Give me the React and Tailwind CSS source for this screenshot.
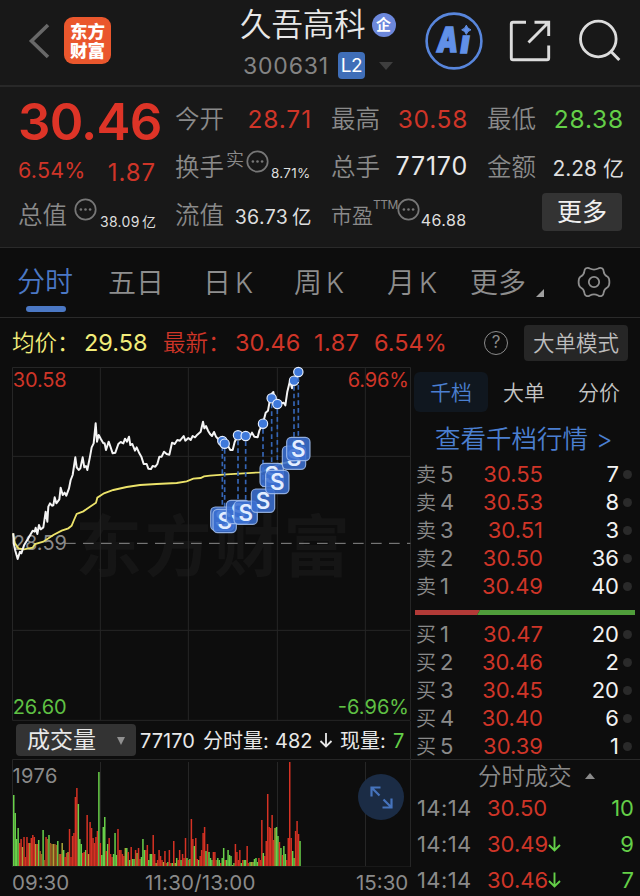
import { clsx } from "clsx";

const sells = [
  { label: "卖", level: "5", price: "30.55", size: "7" },
  { label: "卖", level: "4", price: "30.53", size: "8" },
  { label: "卖", level: "3", price: "30.51", size: "3" },
  { label: "卖", level: "2", price: "30.50", size: "36" },
  { label: "卖", level: "1", price: "30.49", size: "40" },
];

const buys = [
  { label: "买", level: "1", price: "30.47", size: "20" },
  { label: "买", level: "2", price: "30.46", size: "2" },
  { label: "买", level: "3", price: "30.45", size: "20" },
  { label: "买", level: "4", price: "30.40", size: "6" },
  { label: "买", level: "5", price: "30.39", size: "1" },
];

const deals = [
  { time: "14:14", price: "30.50", down: false, size: "10" },
  { time: "14:14", price: "30.49", down: true, size: "9" },
  { time: "14:14", price: "30.46", down: true, size: "7" },
];

// chart units are thirds of a pixel
const pricePoints =
  "40,520 41,550 46,572 53,597 60,575 64,580 72,556 85,535 98,512 104,515 107,503 112,522 117,495 122,508 130,502 137,455 142,485 145,440 150,430 156,437 160,436 164,412 169,430 178,418 182,383 188,405 194,398 199,407 207,385 212,360 218,345 226,292 230,322 236,330 241,325 248,292 253,322 258,318 262,330 270,290 275,262 281,250 287,190 291,245 296,225 303,238 310,250 314,250 318,270 326,245 332,262 338,280 346,278 355,252 362,246 370,250 375,236 381,245 387,230 391,255 397,252 405,272 410,262 418,280 424,290 431,312 440,312 445,326 453,327 458,318 466,320 472,312 478,290 485,290 492,275 500,282 508,284 516,248 524,252 532,240 540,242 551,228 556,242 565,234 572,240 578,228 585,232 592,224 602,215 609,185 613,205 618,198 624,212 630,222 636,228 642,216 648,230 657,240 664,240 674,250 684,258 691,270 698,270 704,246 712,228 725,225 737,228 750,228 756,218 763,230 773,232 778,212 789,190 797,158 804,152 810,118 816,100 820,96 824,118 832,132 843,130 851,128 856,136 862,95 870,62 876,85 882,62 889,45 896,36";

const averagePoints =
  "39,520 45,550 55,565 72,568 98,563 105,552 130,545 160,525 185,512 205,505 215,497 222,480 230,462 250,454 270,440 288,428 292,413 312,400 340,390 380,381 420,375 470,372 530,369 560,364 580,356 602,354 612,349 630,347 680,343 780,337 810,325 840,312 880,303 895,298";

const signals = [
  { x: 667, dot: 243, tag: 476 },
  { x: 674, dot: 251, tag: 483 },
  { x: 714, dot: 226, tag: 456 },
  { x: 737, dot: 228, tag: 458 },
  { x: 789, dot: 191, tag: 422 },
  { x: 815, dot: 115, tag: 345 },
  { x: 832, dot: 132, tag: 366 },
  { x: 882, dot: 62, tag: 293 },
  { x: 895, dot: 36, tag: 267 },
];

const volumes =
  "g71 g53 g27 g38 r23 r27 y19 r29 r9 r29 r23 y23 r28 r31 r29 y22 r22 g26 o15 o12 g36 o6 r29 o27 g31 o23 o22 y22 o22 o21 g25 o12 r12 y23 g16 r9 r13 y14 r37 r9 r30 r33 r69 r78 g62 g27 g22 r13 r14 g16 r51 y12 r44 r38 r28 r23 r29 r35 g94 r23 g11 g39 g49 r15 g22 r28 r12 r9 g12 g33 g11 r37 r16 r16 r12 r10 y18 g18 r14 g6 r19 g7 g7 r16 y13 r18 r7 g9 g27 g16 r16 r21 g6 g12 g12 r31 r12 y3 r6 r16 r10 r6 y4 r15 r3 g4 r16 r3 g3 r25 y3 g8 r6 r16 g6 r12 r8 r28 g8 r6 g7 r47 r27 g20 r28 r7 g6 r10 r16 r33 r39 g15 r22 g14 g8 g6 r14 r14 o6 g8 g6 r3 g8 g18 r6 g6 g16 g11 g10 y1 g3 r22 r14 r6 r16 g3 r6 g6 g6 r20 r3 g4 y4 y4 g7 g8 g4 r8 r6 r46 g13 r10 r25 r72 r39 r38 r51 r26 y38 g39 g30 r24 g18 r11 g20 g12 r6 r28 r104 r28 g15 g8 r35 r45 r32 g25"
    .split(" ")
    .map((v) => ({ kind: v[0], height: Number(v.slice(1)) }));

const volumeFill = { r: "#d53224", g: "#69d04a", y: "#a9a637", o: "#9c5a22" };

function MoreDots({ className }) {
  return (
    <svg
      className={clsx("h-[23px] w-[23px] shrink-0", className)}
      viewBox="0 0 23 23"
      fill="#777"
    >
      <circle cx="11.5" cy="11.5" r="10.2" fill="none" stroke="#777" strokeWidth="1.7" />
      <circle cx="6.9" cy="11.5" r="1.3" />
      <circle cx="11.5" cy="11.5" r="1.3" />
      <circle cx="16.1" cy="11.5" r="1.3" />
    </svg>
  );
}

function Header() {
  return (
    <header className="flex h-[87px] shrink-0 border-b-2 border-[#282828] bg-[#181818]">
      <svg className="mt-[23px] ml-7 h-9 w-[22px]" viewBox="0 0 22 36">
        <path d="M20 2L3.5 18L20 34" fill="none" stroke="#686868" strokeWidth="3.6" />
      </svg>
      <div className="mt-[17px] ml-3.5 flex h-[47px] w-[47px] flex-col items-center justify-center rounded-[9px] bg-[#ea572d] text-[17.5px] leading-[19px] font-black text-white">
        <span>东方</span>
        <span>财富</span>
      </div>
      <div className="ml-[129px] w-[180px]">
        <div className="flex h-[50px] items-center">
          <h1 className="pt-0.5 text-[31.4px] font-[350] whitespace-nowrap text-[#e8e8e8]">
            久吾高科
          </h1>
          <span className="ml-1.5 flex h-6 w-6 items-center justify-center rounded-full bg-[#6c88dc] text-[15px] font-bold text-white">
            企
          </span>
        </div>
        <div className="flex h-[31px] items-center pl-[3px]">
          <span className="w-[95px] pt-0.5 text-[23px] tracking-[0.8px] text-[#848484]">
            300631
          </span>
          <span className="flex h-[27px] w-[27px] items-center justify-center rounded bg-[#3f6eb8] pt-px text-[19px] tracking-[-0.5px] text-white">
            L2
          </span>
          <svg className="ml-3.5 h-2 w-3.5" viewBox="0 0 14 8">
            <path d="M0 0H14L7 8Z" fill="#3e3e3e" />
          </svg>
        </div>
      </div>
      <svg className="mt-3 ml-1 h-[58px] w-[60px]" viewBox="424 12 60 58">
        <circle cx="454" cy="41" r="27.4" fill="none" stroke="#5886dc" strokeWidth="2.6" />
        <g fill="#6190e8" stroke="#6190e8" strokeWidth="1.4" className="text-[34px] font-black italic">
          <text x="437" y="51.5" textLength="21" lengthAdjust="spacingAndGlyphs">
            A
          </text>
          <text x="460.5" y="52.5" fontSize="31" textLength="9" lengthAdjust="spacingAndGlyphs">
            ı
          </text>
        </g>
        <path
          d="M466.3 25.2Q467.3 28.7 471 29.8Q467.3 31 466.3 34.4Q465.3 31 461.7 29.8Q465.3 28.7 466.3 25.2Z"
          fill="#6190e8"
          stroke="#6190e8"
          strokeWidth="1"
        />
      </svg>
      <svg className="mt-[19px] ml-6 h-11 w-11" viewBox="508 19 44 44">
        <path
          d="M526 22.2H513Q511.3 22.2 511.3 24V58Q511.3 59.8 513 59.8H547Q548.7 59.8 548.7 58V45.5M534.5 22.2H548.7V36M548.7 22.2L528.5 42.5"
          fill="none"
          stroke="#dcdcdc"
          strokeWidth="2.9"
        />
      </svg>
      <svg className="mt-[18px] ml-6 h-[46px] w-[46px]" viewBox="576 18 46 46">
        <circle cx="598.3" cy="39" r="17.8" fill="none" stroke="#dcdcdc" strokeWidth="2.8" />
        <path d="M610.5 51L619.3 60" stroke="#dcdcdc" strokeWidth="3" />
      </svg>
    </header>
  );
}

function Stats() {
  const label = "text-[24.5px] font-[350] text-[#8a8a8a]";
  return (
    <section className="flex h-[161px] shrink-0 gap-[19px] border-b border-[#2a2a2a] bg-[#181818] pt-2 pl-[18px] whitespace-nowrap">
      <div className="w-[138px]">
        <div className="flex h-12 items-center pt-1.5 text-[51px] font-semibold tracking-[-0.8px] text-[#dd3427]">
          30.46
        </div>
        <div className="flex h-12 items-center justify-between pt-1.5 text-[#cf3528]">
          <span className="text-[21.5px] tracking-[0.2px]">6.54%</span>
          <span className="pt-1.5 text-[24px] tracking-[0.9px]">1.87</span>
        </div>
        <div className="flex h-12 items-center">
          <span className={label}>总值</span>
          <MoreDots className="mb-3 ml-[7px]" />
          <span className="mt-3 ml-[3px] text-[14px] tracking-[0.3px] [word-spacing:-2px] text-[#dedede]">
            38.09 亿
          </span>
        </div>
      </div>
      <div className="w-[137px]">
        <div className="flex h-12 items-center justify-between">
          <span className={label}>今开</span>
          <span className="text-[24.5px] tracking-[0.9px] text-[#cf3528]">28.71</span>
        </div>
        <div className="flex h-12 items-center">
          <span className={label}>换手</span>
          <span className="mb-4 ml-0.5 text-[18px] font-[350] text-[#8a8a8a]">实</span>
          <MoreDots className="mb-3 ml-0.5" />
          <span className="mt-3 ml-0.5 text-[13.5px] tracking-[0.3px] text-[#dedede]">8.71%</span>
        </div>
        <div className="flex h-12 items-center justify-between">
          <span className={label}>流值</span>
          <span className="pt-1.5 text-[19.5px] tracking-[0.4px] [word-spacing:-2px] text-[#dedede]">
            36.73 亿
          </span>
        </div>
      </div>
      <div className="w-[137px]">
        <div className="flex h-12 items-center justify-between">
          <span className={label}>最高</span>
          <span className="text-[24.5px] tracking-[0.7px] text-[#cf3528]">30.58</span>
        </div>
        <div className="flex h-12 items-center justify-between">
          <span className={label}>总手</span>
          <span className="text-[25px] tracking-[0.8px] text-[#e8e8e8]">77170</span>
        </div>
        <div className="flex h-12 items-center">
          <span className="pt-0.5 text-[21px] font-[350] text-[#8a8a8a]">市盈</span>
          <span className="mb-5 text-[12px] tracking-[-0.5px] text-[#8a8a8a]">TTM</span>
          <MoreDots className="mb-3 -ml-px" />
          <span className="mt-2.5 ml-px text-[16px] tracking-[0.4px] text-[#dedede]">46.88</span>
        </div>
      </div>
      <div className="w-[137px]">
        <div className="flex h-12 items-center justify-between">
          <span className={label}>最低</span>
          <span className="text-[24.5px] tracking-[0.8px] text-[#64cf48]">28.38</span>
        </div>
        <div className="flex h-12 items-center justify-between">
          <span className={label}>金额</span>
          <span className="pt-1 text-[21px] text-[#dedede]">2.28 亿</span>
        </div>
        <button className="mt-0.5 mr-0.5 ml-auto block h-[38px] w-20 rounded bg-[#333] text-[25px] leading-[39px] text-[#f0f0f0]">
          更多
        </button>
      </div>
    </section>
  );
}

function PeriodTabs() {
  return (
    <nav className="flex h-[70px] shrink-0 items-center border-b border-[#2a2a2a] text-[28px] font-[350] whitespace-nowrap [word-spacing:-4px] text-[#8e8e8e]">
      <div className="flex h-[70px] w-[91px] flex-col pl-[17px] text-[#4b78c4]">
        <span className="flex h-[58px] items-center pt-2.5">分时</span>
        <span className="ml-[9px] h-1.5 w-10 shrink-0 rounded-full bg-[#4b78c4]" />
      </div>
      <span className="ml-[17px] w-[95px]">五日</span>
      <span className="w-[91px]">日 K</span>
      <span className="w-[93px]">周 K</span>
      <span className="w-[83px]">月 K</span>
      <span>更多</span>
      <svg className="mt-5 ml-2.5 h-2 w-2" viewBox="0 0 8 8">
        <path d="M8 0V8H0Z" fill="#a0a0a0" />
      </svg>
      <svg className="mb-0.5 ml-[33px] h-[34px] w-[34px]" viewBox="-17 -17 34 34">
        <g fill="none" stroke="#8e8e8e" strokeWidth="1.8" strokeLinejoin="round">
          <path d="M-8 -13.7Q-6 -14.8 -4.2 -13.5Q0 -11.4 4.2 -13.5Q6 -14.8 8 -13.7Q9.6 -12.8 9.7 -10.5Q10 -7 13.6 -5.2Q15.4 -4 15.4 0Q15.4 4 13.6 5.2Q10 7 9.7 10.5Q9.6 12.8 8 13.7Q6 14.8 4.2 13.5Q0 11.4 -4.2 13.5Q-6 14.8 -8 13.7Q-9.6 12.8 -9.7 10.5Q-10 7 -13.6 5.2Q-15.4 4 -15.4 0Q-15.4 -4 -13.6 -5.2Q-10 -7 -9.7 -10.5Q-9.6 -12.8 -8 -13.7Z" />
          <circle r="5.2" />
        </g>
      </svg>
    </nav>
  );
}

function QuoteLine() {
  return (
    <div className="flex h-[49px] shrink-0 items-center pt-px pl-3 text-[23.5px] whitespace-nowrap text-[#cf3528]">
      <span className="w-[72px] text-[22.5px] font-[350] text-[#f2ec7a]">均价：</span>
      <span className="w-[79px] text-[#f2ec7a]">29.58</span>
      <span className="w-[72px] text-[22.5px] font-[350]">最新：</span>
      <span className="w-[79px]">30.46</span>
      <span className="w-[60px] tracking-[0.5px]">1.87</span>
      <span className="w-[110px]">6.54%</span>
      <span className="flex h-6 w-6 shrink-0 items-center justify-center rounded-full border-[1.5px] border-[#8a8a8a] text-[17px] text-[#8a8a8a]">
        ?
      </span>
      <button className="ml-4 h-9 w-[104px] rounded bg-[#262626] text-[21.5px] font-[350] text-[#bdbdbd]">
        大单模式
      </button>
    </div>
  );
}

function PriceChart() {
  return (
    <svg
      className="block h-[354px] w-[399px]"
      viewBox="36 21 1197 1062"
      fontSize="60"
      overflow="visible"
    >
      <text x="226" y="634" fontSize="200" fontWeight="700" fill="#151515" textLength="824">
        东方财富
      </text>
      <path
        d="M37.5 22.5H1231.5V1081H37.5ZM301 22V1081M565 22V1081M832 22V1081M1096 22V1081M37 289H1231M37 811H1231"
        fill="none"
        stroke="#262626"
        strokeWidth="3"
      />
      <path d="M195 550H1231" stroke="#8a8a8a" strokeWidth="3" strokeDasharray="32 22" />
      <text x="38" y="571" fill="#8a8a8a" textLength="163">
        28.59
      </text>
      <polyline points={averagePoints} fill="none" stroke="#ece36a" strokeWidth="5.5" />
      <polyline
        points={pricePoints}
        fill="none"
        stroke="#f4f4f4"
        strokeWidth="6"
        strokeLinejoin="round"
      />
      {signals.map((s) => (
        <g key={s.x}>
          <path
            d={`M${s.x} ${s.dot + 16}V${s.tag - 35}`}
            stroke="#3565b4"
            strokeWidth="5"
            strokeDasharray="14 9"
          />
          <circle cx={s.x} cy={s.dot} r="14" fill="#3f79da" stroke="#e6efff" strokeWidth="3.5" />
        </g>
      ))}
      {signals.map((s) => (
        <g key={s.x}>
          <rect
            x={s.x - 35}
            y={s.tag - 35}
            width="70"
            height="70"
            rx="14"
            fill="#3b70d2"
            fillOpacity="0.88"
            stroke="#a3bfee"
            strokeOpacity="0.85"
            strokeWidth="3.5"
          />
          <text
            x={s.x}
            y={s.tag + 24}
            fontSize="67"
            fontWeight="600"
            fill="#e3edff"
            textAnchor="middle"
          >
            S
          </text>
        </g>
      ))}
      <text x="38" y="82" fill="#cf3528" textLength="162">
        30.58
      </text>
      <text x="1043" y="82" fill="#cf3528" textLength="184">
        6.96%
      </text>
      <text x="38" y="1062" fill="#5fc044" textLength="162">
        26.60
      </text>
      <text x="1013" y="1062" fill="#5fc044" textLength="214">
        -6.96%
      </text>
    </svg>
  );
}

function VolumeChart() {
  return (
    <div className="relative h-[108px]">
      <svg className="block h-[108px] w-[399px]" viewBox="12 759 399 108">
        <path
          d="M12.5 759.5H410.5V867H12.5ZM100.5 762V866M188.5 762V866M277.5 762V866M365.5 762V866"
          fill="none"
          stroke="#262626"
        />
        {volumes.map((v, i) => (
          <rect
            key={i}
            x={13 + i * 1.468}
            y={866 - v.height}
            width="1.5"
            height={v.height}
            fill={volumeFill[v.kind]}
          />
        ))}
        <text x="12.5" y="782.5" fontSize="20" fill="#8a8a8a" textLength="45">
          1976
        </text>
      </svg>
      <button className="absolute top-[15px] left-[346px] flex h-[46px] w-[46px] items-center justify-center rounded-full bg-[#1b2c45]">
        <svg className="h-[23px] w-[23px]" viewBox="0 0 23 23">
          <path
            d="M10.5 1.5H1.5V10.5M1.5 1.5L9.5 9.5M21.5 12.5V21.5H12.5M21.5 21.5L13.5 13.5"
            fill="none"
            stroke="#4674bd"
            strokeWidth="2.2"
          />
        </svg>
      </button>
    </div>
  );
}

function ChartPanel() {
  return (
    <div className="w-[399px] shrink-0">
      <PriceChart />
      <div className="flex h-[38px] items-center border-r border-[#262626] pl-1 text-[20px] whitespace-nowrap text-[#e8e8e8]">
        <button className="flex h-8 w-[120px] shrink-0 items-center justify-between rounded bg-[#333] pt-px pr-[11px] pl-[11px] text-[23px]">
          成交量
          <svg className="h-2 w-2" viewBox="0 0 8 8">
            <path d="M0 0H8L4 8Z" fill="#909090" />
          </svg>
        </button>
        <span className="ml-1 w-[63px] pt-px">77170</span>
        <span className="w-[72px] pt-px">分时量:</span>
        <span className="w-[43px] pt-px">482</span>
        <svg className="mr-1.5 h-4 w-4" viewBox="0 0 16 16">
          <path d="M8 1V15M2.5 9L8 14.5L13.5 9" fill="none" stroke="#e8e8e8" strokeWidth="1.8" />
        </svg>
        <span className="w-[53px] pt-px">现量:</span>
        <span className="pt-px text-[#64cf48]">7</span>
      </div>
      <VolumeChart />
      <div className="flex h-[29px] items-center pt-1 text-[20.5px] text-[#8a8a8a]">
        <span className="w-[133px]">09:30</span>
        <span className="w-[211px] tracking-[0.2px]">11:30/13:00</span>
        <span>15:30</span>
      </div>
    </div>
  );
}

function BookRow({ label, level, price, size }) {
  return (
    <div className="flex h-7 items-center pl-[5px] text-[22px]">
      <span className="w-6 pt-px text-[20px] font-[350] text-[#8a8a8a]">{label}</span>
      <span className="w-[30px] pt-px text-[#8a8a8a]">{level}</span>
      <span className="w-[73px] pt-px text-right text-[#cf3528]">{price}</span>
      <span className="w-[76px] pt-px text-right text-[#f2f2f2]">{size}</span>
      <span className="ml-1 h-[9px] w-[9px] rounded-full bg-[#2a2a2a]" />
    </div>
  );
}

function OrderBook() {
  return (
    <aside className="w-[229px] shrink-0">
      <div className="flex h-[45px] items-center pt-1 pl-[3px] text-[21px] font-[350] whitespace-nowrap text-[#c4c4c4]">
        <span className="flex h-10 w-[74px] items-center justify-center rounded-md bg-[#10171f] pt-0.5 text-[#4b7fd0]">
          千档
        </span>
        <span className="ml-[15px] w-[75px] pt-0.5">大单</span>
        <span className="pt-0.5">分价</span>
      </div>
      <div className="flex h-[48px] items-center pt-1.5 pl-6 text-[25.5px] font-[350] whitespace-nowrap text-[#4b7fd0]">
        查看千档行情
        <span className="ml-2">&gt;</span>
      </div>
      {sells.map((row) => (
        <BookRow key={row.price} {...row} />
      ))}
      <div className="flex h-5 items-center pl-1">
        <svg className="mt-1 h-[5px] w-[220px]" viewBox="0 0 220 5">
          <path d="M0 0H65L62 5H0Z" fill="#b23a37" />
          <path d="M65 0H220V5H62Z" fill="#4f9d3a" />
        </svg>
      </div>
      {buys.map((row) => (
        <BookRow key={row.price} {...row} />
      ))}
      <div className="-mt-px flex h-[31px] items-center border-t border-[#2a2a2a] pt-1 pl-[67px] text-[23.4px] font-[350] whitespace-nowrap text-[#8a8a8a]">
        分时成交
        <svg className="mb-0.5 ml-[13px] h-1.5 w-2.5" viewBox="0 0 10 6">
          <path d="M5 0L10 6H0Z" fill="#8a8a8a" />
        </svg>
      </div>
      {deals.map((deal) => (
        <div key={deal.price} className="flex h-9 items-center pl-1.5 text-[22px]">
          <span className="w-[70px] tracking-[0.4px] text-[#8a8a8a]">{deal.time}</span>
          <span className="w-[61px] text-[#cf3528]">{deal.price}</span>
          <svg className="h-4 w-[13px]" viewBox="0 0 13 16">
            {deal.down && (
              <path
                d="M6.5 0.5V15M1 9L6.5 14.5L12 9"
                fill="none"
                stroke="#64cf48"
                strokeWidth="1.9"
              />
            )}
          </svg>
          <span className="w-[73px] text-right text-[#64cf48]">{deal.size}</span>
        </div>
      ))}
    </aside>
  );
}

export default function App() {
  return (
    <div className="flex h-[896px] w-[640px] flex-col overflow-hidden bg-[#0d0d0d] font-[Inter,'Noto_Sans_CJK_SC',sans-serif]">
      <Header />
      <Stats />
      <PeriodTabs />
      <QuoteLine />
      <main className="flex pl-3">
        <ChartPanel />
        <OrderBook />
      </main>
    </div>
  );
}
